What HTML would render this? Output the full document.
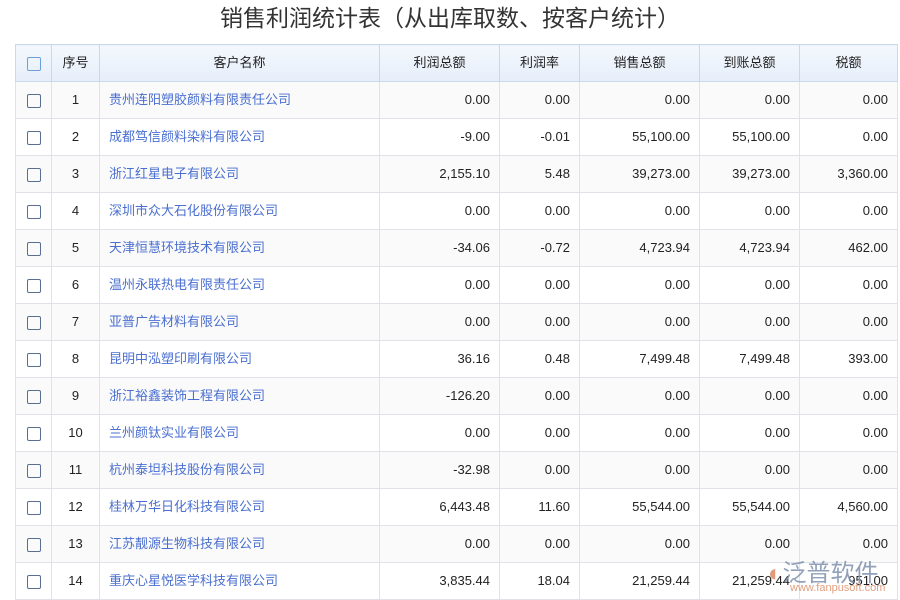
<!DOCTYPE html><html><head><meta charset="utf-8"><style>
body{margin:0;width:900px;height:600px;overflow:hidden;background:#fff;font-family:"Liberation Sans","Noto Sans CJK SC",sans-serif;}
.t{position:absolute;top:0;left:0;width:900px;text-align:center;font-size:23px;line-height:36px;color:#333;}
table{position:absolute;left:15px;top:44px;border-collapse:collapse;table-layout:fixed;font-size:13px;color:#222;}
td,th{border:1px solid #dfe3e8;height:36px;padding:0 9px;white-space:nowrap;line-height:16px;}
th{background:linear-gradient(#f4f8fd,#e6eefa);font-weight:normal;border-color:#c9d9ec;height:36px;}
tr:nth-child(even) td{background:#fafafa}
.c{text-align:center}.r{text-align:right}
.n{color:#4a6fd0}
.cb{display:inline-block;width:12px;height:12px;border:1px solid #5a6f90;border-radius:2px;vertical-align:middle}
th .cb{border-color:#6aa0d8}
.wm{position:absolute;left:768px;top:553px;font-size:24px;color:#8797b2;opacity:.9}
.wm span{color:#e0906a}
.wm2{position:absolute;left:790px;top:582px;font-size:11px;color:#e0a080}
</style></head><body>
<div class="t">销售利润统计表（从出库取数、按客户统计）</div>
<table>
<colgroup><col width="36"><col width="48"><col width="280"><col width="120"><col width="80"><col width="120"><col width="100"><col width="98"></colgroup>
<tr><th><span class="cb"></span></th><th>序号</th><th>客户名称</th><th>利润总额</th><th>利润率</th><th>销售总额</th><th>到账总额</th><th>税额</th></tr>
<tr><td class="c"><span class="cb"></span></td><td class="c">1</td><td class="n">贵州连阳塑胶颜料有限责任公司</td><td class="r">0.00</td><td class="r">0.00</td><td class="r">0.00</td><td class="r">0.00</td><td class="r">0.00</td></tr>
<tr><td class="c"><span class="cb"></span></td><td class="c">2</td><td class="n">成都笃信颜料染料有限公司</td><td class="r">-9.00</td><td class="r">-0.01</td><td class="r">55,100.00</td><td class="r">55,100.00</td><td class="r">0.00</td></tr>
<tr><td class="c"><span class="cb"></span></td><td class="c">3</td><td class="n">浙江红星电子有限公司</td><td class="r">2,155.10</td><td class="r">5.48</td><td class="r">39,273.00</td><td class="r">39,273.00</td><td class="r">3,360.00</td></tr>
<tr><td class="c"><span class="cb"></span></td><td class="c">4</td><td class="n">深圳市众大石化股份有限公司</td><td class="r">0.00</td><td class="r">0.00</td><td class="r">0.00</td><td class="r">0.00</td><td class="r">0.00</td></tr>
<tr><td class="c"><span class="cb"></span></td><td class="c">5</td><td class="n">天津恒慧环境技术有限公司</td><td class="r">-34.06</td><td class="r">-0.72</td><td class="r">4,723.94</td><td class="r">4,723.94</td><td class="r">462.00</td></tr>
<tr><td class="c"><span class="cb"></span></td><td class="c">6</td><td class="n">温州永联热电有限责任公司</td><td class="r">0.00</td><td class="r">0.00</td><td class="r">0.00</td><td class="r">0.00</td><td class="r">0.00</td></tr>
<tr><td class="c"><span class="cb"></span></td><td class="c">7</td><td class="n">亚普广告材料有限公司</td><td class="r">0.00</td><td class="r">0.00</td><td class="r">0.00</td><td class="r">0.00</td><td class="r">0.00</td></tr>
<tr><td class="c"><span class="cb"></span></td><td class="c">8</td><td class="n">昆明中泓塑印刷有限公司</td><td class="r">36.16</td><td class="r">0.48</td><td class="r">7,499.48</td><td class="r">7,499.48</td><td class="r">393.00</td></tr>
<tr><td class="c"><span class="cb"></span></td><td class="c">9</td><td class="n">浙江裕鑫装饰工程有限公司</td><td class="r">-126.20</td><td class="r">0.00</td><td class="r">0.00</td><td class="r">0.00</td><td class="r">0.00</td></tr>
<tr><td class="c"><span class="cb"></span></td><td class="c">10</td><td class="n">兰州颜钛实业有限公司</td><td class="r">0.00</td><td class="r">0.00</td><td class="r">0.00</td><td class="r">0.00</td><td class="r">0.00</td></tr>
<tr><td class="c"><span class="cb"></span></td><td class="c">11</td><td class="n">杭州泰坦科技股份有限公司</td><td class="r">-32.98</td><td class="r">0.00</td><td class="r">0.00</td><td class="r">0.00</td><td class="r">0.00</td></tr>
<tr><td class="c"><span class="cb"></span></td><td class="c">12</td><td class="n">桂林万华日化科技有限公司</td><td class="r">6,443.48</td><td class="r">11.60</td><td class="r">55,544.00</td><td class="r">55,544.00</td><td class="r">4,560.00</td></tr>
<tr><td class="c"><span class="cb"></span></td><td class="c">13</td><td class="n">江苏靓源生物科技有限公司</td><td class="r">0.00</td><td class="r">0.00</td><td class="r">0.00</td><td class="r">0.00</td><td class="r">0.00</td></tr>
<tr><td class="c"><span class="cb"></span></td><td class="c">14</td><td class="n">重庆心星悦医学科技有限公司</td><td class="r">3,835.44</td><td class="r">18.04</td><td class="r">21,259.44</td><td class="r">21,259.44</td><td class="r">951.00</td></tr>
</table>
<div class="wm"><span>◐</span>泛普软件</div>
<div class="wm2">www.fanpusoft.com</div>
</body></html>
